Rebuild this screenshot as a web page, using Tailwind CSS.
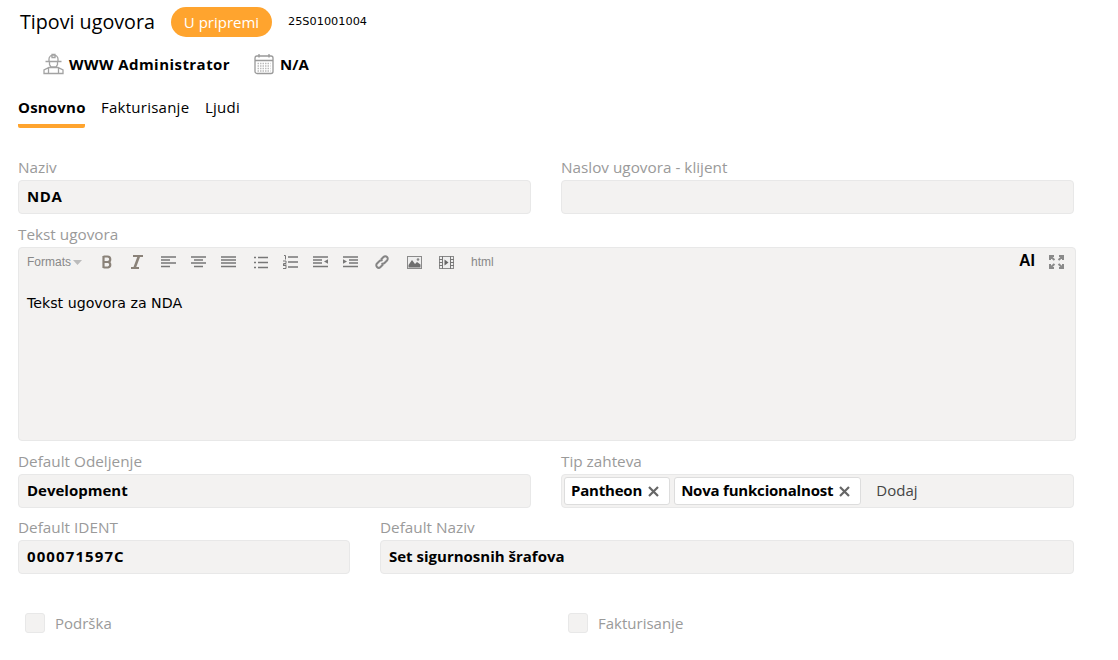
<!DOCTYPE html>
<html><head><meta charset="utf-8"><script src="https://cdn.jsdelivr.net/npm/@tailwindcss/browser@4"></script></head>
<body class="bg-white">
<div class="w-[1118px] h-[660px] overflow-hidden font-['Open_Sans','Noto_Sans',sans-serif] text-black relative">
  <div class="flex items-center h-[30px] mt-[7px] ml-[20px]">
    <span class="text-[19.7px] leading-[30px] w-[151px]">Tipovi ugovora</span>
    <span class="h-[30px] w-[101px] rounded-full bg-[#ffa42e] text-white text-[15px] flex items-center justify-center">U pripremi</span>
    <span class="ml-[16px] text-[11.3px] font-['DejaVu_Sans',sans-serif]">25S01001004</span>
  </div>
  <div class="flex items-center h-[24px] mt-[15px] ml-[43px]">
    <svg class="w-[21px] h-[22px]" viewBox="0 0 21 22" fill="none" stroke="#a3a3a3" stroke-width="1.300"><path d="M6 8.500V6a4.500 4 0 0 1 9 0v2.500M2.500 8.500h16M9 1.500h3v3H9zM6.500 9v2.500l1.500 2.500h5l1.500-2.500V9M1 20.500v-3.500l5-2.500h9l5 2.500v3.500zM5.500 15v5.500M15.500 15v5.500"/></svg>
    <span class="ml-[5px] text-[15px] font-bold w-[185px] tracking-[0.45px]">WWW Administrator</span>
    <svg class="w-[20px] h-[22px]" viewBox="0 0 20 22" fill="none" stroke="#999" stroke-width="1.300"><rect x="1" y="3" width="18" height="17.500" rx="2"/><path d="M1 7.500h18M5 1v3.500M15 1v3.500"/><path stroke="#bbb" stroke-dasharray="1.500 1" d="M3.500 10.500h13M3.500 13h13M3.500 15.500h13M3.500 18h13"/></svg>
    <span class="ml-[6px] text-[15px] font-bold">N/A</span>
  </div>
  <div class="flex ml-[18px] mt-[22px] h-[30px] text-[15px] gap-[16px]">
    <span class="w-[67px] font-bold border-b-4 border-[#ffa42e] rounded-b-[2px] leading-[19px] h-[30px] tracking-[0.2px]">Osnovno</span>
    <span class="leading-[19px] w-[88px] tracking-[0.25px]">Fakturisanje</span>
    <span class="leading-[19px] tracking-[0.25px]">Ljudi</span>
  </div>
  <div class="ml-[18px] w-[1056px] mt-[29px]">
    <div class="grid grid-cols-2 gap-x-[30px]">
      <div>
        <div class="text-[15.3px] leading-[20px] text-[#9a9a9a] h-[23px]">Naziv</div>
        <div class="h-[34px] bg-[#f3f2f1] border border-[#e8e8e8] rounded-[4px] px-[8px] pb-[2px] flex items-center text-[15px] font-bold tracking-[0.6px]">NDA</div>
      </div>
      <div>
        <div class="text-[15.3px] leading-[20px] text-[#9a9a9a] h-[23px]">Naslov ugovora - klijent</div>
        <div class="h-[34px] bg-[#f3f2f1] border border-[#e8e8e8] rounded-[4px]"></div>
      </div>
    </div>
    <div class="text-[15.3px] leading-[20px] text-[#9a9a9a] mt-[10px] h-[23px]">Tekst ugovora</div>
    <div class="w-[1058px] h-[194px] bg-[#f3f2f1] border border-[#e8e8e8] rounded-[4px] relative">
      <div class="flex items-center h-[28px] text-[#7a7a7a]">
        <span class="ml-[8px] text-[12px] font-['Liberation_Sans',sans-serif] text-[#888] w-[46px]">Formats</span>
        <svg class="w-[9px] h-[5px]" viewBox="0 0 9 5"><path d="M0 0h9L4.500 5z" fill="#bbb"/></svg>
        <svg class="ml-[19px] w-[12px] h-[14px]" viewBox="0 0 12 14" fill="none" stroke="#8a8279" stroke-width="2.200"><path d="M2.500 1v12M2.500 1.500h4a2.700 2.700 0 0 1 0 5.500h-4M2.500 7h4.500a2.800 2.800 0 0 1 0 5.500h-4.500"/></svg>
        <svg class="ml-[17px] w-[14px] h-[14px]" viewBox="0 0 14 14" fill="none" stroke="#8a8279"><path stroke-width="1.800" d="M3 1h10M1 13h8"/><path stroke-width="2.500" d="M9 1 4.500 13"/></svg>
        <svg class="ml-[17px] w-[15px] h-[12px]" viewBox="0 0 15 12" stroke="#777" stroke-width="1.600"><path d="M0 1h15M0 4h9M0 7h15M0 10.500h9"/></svg>
        <svg class="ml-[15px] w-[15px] h-[12px]" viewBox="0 0 15 12" stroke="#777" stroke-width="1.600"><path d="M0 1h15M3 4h9M0 7h15M3 10.500h9"/></svg>
        <svg class="ml-[15px] w-[15px] h-[12px]" viewBox="0 0 15 12" stroke="#777" stroke-width="1.600"><path d="M0 1h15M0 4h15M0 7h15M0 10.500h15"/></svg>
        <svg class="ml-[18px] w-[14px] h-[13px]" viewBox="0 0 14 13" stroke="#777" stroke-width="1.600"><path d="M4 1.500h10M4 6.500h10M4 11.500h10" /><path stroke-dasharray="2 1" d="M0 1.500h2M0 6.500h2M0 11.500h2"/></svg>
        <svg class="ml-[15px] w-[15px] h-[14px]" viewBox="0 0 15 14" fill="none" stroke="#777"><path stroke-width="1.600" d="M5 2h10M5 7h10M5 12h10"/><path stroke-width="1" d="M1 .5h1.500v4M0 6h3v2.500H.5V10h3M0 10.500h3v3h-3"/></svg>
        <svg class="ml-[15px] w-[15px] h-[12px]" viewBox="0 0 15 12" stroke="#777" stroke-width="1.600"><path d="M0 1h15M0 4h9M0 7h9M0 10.500h15"/><path d="M15 3.200v4.600L11 5.500z" fill="#777" stroke="none"/></svg>
        <svg class="ml-[15px] w-[15px] h-[12px]" viewBox="0 0 15 12" stroke="#777" stroke-width="1.600"><path d="M0 1h15M6 4h9M6 7h9M0 10.500h15"/><path d="M0 3.200v4.600L4 5.500z" fill="#777" stroke="none"/></svg>
        <svg class="ml-[17px] w-[14px] h-[14px]" viewBox="0 0 14 14" fill="none" stroke="#858585" stroke-width="2"><path d="M6 4.500 8.500 2a2.300 2.300 0 0 1 3.500 3.500L9.500 8a2.300 2.300 0 0 1-3 .3M8 9.500 5.500 12A2.300 2.300 0 0 1 2 8.500L4.500 6a2.300 2.300 0 0 1 3-.3"/></svg>
        <svg class="ml-[18px] w-[15px] h-[13px]" viewBox="0 0 15 13"><rect x=".5" y=".5" width="14" height="12" fill="#eee" stroke="#8a8a8a"/><path d="M1.500 11.500V9L5 4l3 4 2-2 3.500 2.500v3z" fill="#6f6f6f"/><circle cx="11" cy="3.500" r="1.300" fill="#888"/></svg>
        <svg class="ml-[17px] w-[15px] h-[13px]" viewBox="0 0 15 13"><rect x=".5" y=".5" width="14" height="12" fill="#eee" stroke="#8a8a8a"/><path d="M3.500 0v13M11.500 0v13M0 3.500h3.500M0 6.500h3.500M0 9.500h3.500M11.500 3.500H15M11.500 6.500H15M11.500 9.500H15" stroke="#777"/><path d="M5.500 3.500v6l4-3z" fill="#666"/></svg>
        <span class="ml-[17px] text-[12px] font-['Liberation_Sans',sans-serif] text-[#888]">html</span>
      </div>
      <span class="absolute left-[1000px] top-[3px] text-[16px] font-bold font-['Liberation_Sans',sans-serif] leading-[20px]">AI</span>
      <svg class="absolute left-[1030px] top-[7px] w-[15px] h-[14px]" viewBox="0 0 15 14" fill="none" stroke="#8a8a8a" stroke-width="2"><path d="M1 5V1h4M10 1h4v4M14 9v4h-4M5 13H1V9M1.500 1.500 5.500 5M13.500 1.500 9.500 5M13.500 12.500 9.500 9M1.500 12.500 5.500 9"/></svg>
      <div class="absolute left-[8px] top-[45px] text-[14.2px] leading-[20px] font-['DejaVu_Sans',sans-serif]">Tekst ugovora za NDA</div>
    </div>
    <div class="grid grid-cols-2 gap-x-[30px] mt-[10px]">
      <div>
        <div class="text-[15.3px] leading-[20px] text-[#9a9a9a] h-[23px]">Default Odeljenje</div>
        <div class="h-[34px] bg-[#f3f2f1] border border-[#e8e8e8] rounded-[4px] px-[8px] pb-[2px] flex items-center text-[15px] font-bold">Development</div>
      </div>
      <div>
        <div class="text-[15.3px] leading-[20px] text-[#9a9a9a] h-[23px]">Tip zahteva</div>
        <div class="h-[34px] bg-[#f3f2f1] border border-[#e8e8e8] rounded-[4px] px-[2px] flex items-center text-[15px]">
          <span class="h-[28px] bg-white border border-[#ddd] rounded-[3px] pl-[6px] pr-[10px] pb-[2px] font-bold flex items-center gap-[6px] tracking-[-0.2px]">Pantheon <svg class="w-[11px] h-[11px] mt-[2px]" viewBox="0 0 11 11" stroke="#666" stroke-width="2.200"><path d="M1 1l9 9M10 1l-9 9"/></svg></span>
          <span class="ml-[4px] h-[28px] bg-white border border-[#ddd] rounded-[3px] pl-[6px] pr-[10px] pb-[2px] font-bold flex items-center gap-[6px] tracking-[-0.2px]">Nova funkcionalnost <svg class="w-[11px] h-[11px] mt-[2px]" viewBox="0 0 11 11" stroke="#666" stroke-width="2.200"><path d="M1 1l9 9M10 1l-9 9"/></svg></span>
          <span class="ml-[15px] pb-[2px] text-[#444]">Dodaj</span>
        </div>
      </div>
    </div>
    <div class="flex gap-x-[30px] mt-[9px]">
      <div class="w-[332px]">
        <div class="text-[15.3px] leading-[20px] text-[#9a9a9a] h-[23px]">Default IDENT</div>
        <div class="h-[34px] bg-[#f3f2f1] border border-[#e8e8e8] rounded-[4px] px-[8px] pb-[2px] flex items-center text-[15px] font-bold tracking-[1.1px]">000071597C</div>
      </div>
      <div class="flex-1">
        <div class="text-[15.3px] leading-[20px] text-[#9a9a9a] h-[23px]">Default Naziv</div>
        <div class="h-[34px] bg-[#f3f2f1] border border-[#e8e8e8] rounded-[4px] px-[8px] pb-[2px] flex items-center text-[15px] font-bold">Set sigurnosnih šrafova</div>
      </div>
    </div>
    <div class="grid grid-cols-2 gap-x-[30px] mt-[39px]">
      <div class="flex items-center ml-[7px] h-[20px]">
        <span class="w-[20px] h-[20px] bg-[#f3f2f1] border border-[#e8e8e8] rounded-[3px]"></span>
        <span class="ml-[10px] text-[15px] text-[#9a9a9a]">Podrška</span>
      </div>
      <div class="flex items-center ml-[7px] h-[20px]">
        <span class="w-[20px] h-[20px] bg-[#f3f2f1] border border-[#e8e8e8] rounded-[3px]"></span>
        <span class="ml-[10px] text-[15px] text-[#9a9a9a]">Fakturisanje</span>
      </div>
    </div>
  </div>
</div>
</body></html>
